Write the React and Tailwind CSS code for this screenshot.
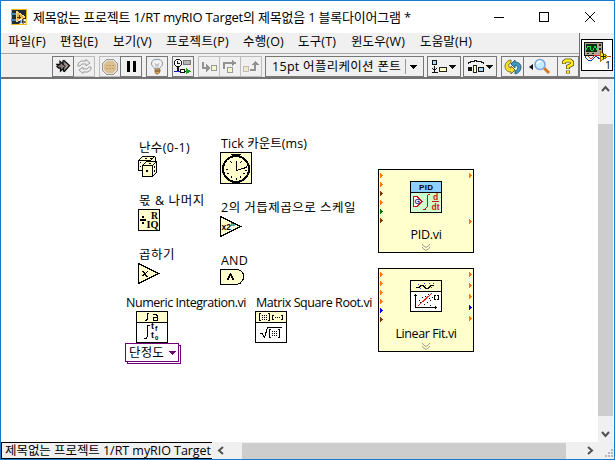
import React, { useLayoutEffect, useRef } from "react";

// Text run whose tracking is computed so that it fills a given width.
function Fit({ w, className = "", children }) {
  const ref = useRef(null);
  useLayoutEffect(() => {
    const el = ref.current;
    el.style.letterSpacing = "0px";
    const natural = el.getBoundingClientRect().width;
    el.style.letterSpacing = (w - natural) / children.length + "px";
  }, [w, children]);
  return (
    <span ref={ref} className={"inline-block shrink-0 whitespace-pre " + className}>
      {children}
    </span>
  );
}

function Svg({ w, h, className = "", children }) {
  return (
    <svg width={w} height={h} viewBox={`0 0 ${w} ${h}`} className={"block shrink-0 " + className} shapeRendering="crispEdges" fill="none">
      {children}
    </svg>
  );
}

const MENU = [
  ["파일(F)", 38, "ml-[7px]"],
  ["편집(E)", 38, "ml-[14px]"],
  ["보기(V)", 39, "ml-[15px]"],
  ["프로젝트(P)", 63, "ml-[14px]"],
  ["수행(O)", 41, "ml-[14px]"],
  ["도구(T)", 38, "ml-[14px]"],
  ["윈도우(W)", 54, "ml-[15px]"],
  ["도움말(H)", 52, "ml-[15px]"],
];

function Cell({ className = "", children }) {
  return <div className={"flex h-full items-center justify-center " + className}>{children}</div>;
}

function AppIcon() {
  return (
    <Svg w={16} h={16}>
      <rect width="16" height="16" fill="#f0b81c" />
      <rect x="1" y="1" width="14" height="14" fill="#242b30" />
      <path d="M0 5H5M0 11H5" stroke="#3e8bc4" strokeWidth="2" />
      <path d="M5 2L14 8L5 13Z" fill="#e9b33b" stroke="#f6dc91" />
      <path d="M6 8H10M8 6V10" stroke="#4b3210" />
      <text x="8" y="15" fontSize="7" fontWeight="bold" fill="#fff" className="font-['Liberation_Sans',sans-serif]">15</text>
    </Svg>
  );
}

function RunArrow() {
  return (
    <svg width="15" height="15" viewBox="0 0 15 15" fill="none" className="block">
      <path d="M1 5.5H4V2.5L7 5V2L8 1.5L13.5 6.5L8.5 12.5L7.5 12V9.5L4.5 12V9H2.5L1 7.5L2 6.5Z" fill="#8b7f7b" stroke="#111" strokeWidth="1.3" />
      <path d="M7 5L9 7.5L7 9.5" stroke="#111" />
      <path d="M9.5 4.5L11.5 6.5L9.5 9" stroke="#bcb3ae" />
    </svg>
  );
}

function LoopArrows() {
  return (
    <svg width="17" height="15" viewBox="0 0 17 15" className="block">
      <path d="M2 7V4.5L5 2H10V.5L14 4L10 7V5H6L4 7ZM15 8V10.5L12 13H7V14.5L3 11L7 8V10H11L13 8Z" fill="#ececec" stroke="#9d9d9d" />
    </svg>
  );
}

function Stop() {
  return (
    <Svg w={16} h={16}>
      <path d="M5 .5H11L15.5 5V11L11 15.5H5L.5 11V5Z" fill="#dcc092" stroke="#999" />
      <path d="M5 1.5H11L14.5 5V11L11 14.5H5L1.5 11V5Z" stroke="#e0dad0" />
      <path d="M4 6H12M4 9H12" stroke="#c6a05e" strokeDasharray="2 1" />
    </Svg>
  );
}

function Bulb() {
  return (
    <svg width="14" height="17" viewBox="0 0 14 17" fill="none">
      <path d="M5 11C4 9 1 8 1.5 5C2 0 12 0 12.5 5C13 8 10 9 9 11Z" fill="#f0f2f3" stroke="#8c969c" />
      <path d="M5 5L6 8L7 6L8 8L9 5M6 8V11M8 8V11" stroke="#aaa" strokeWidth=".7" />
      <path d="M5 11H10V14L8 16H6L5 14Z" fill="#e2a34c" stroke="#78664e" strokeWidth=".7" />
      <path d="M5 13H10" stroke="#694b29" />
    </svg>
  );
}

function Retain() {
  return (
    <Svg w={18} h={15}>
      <path d="M2 0H6V1H7V2H8V6H7V7H6V8H2V7H1V6H0V2H1V1H2Z" fill="#111" />
      <path d="M2 1H6V2H7V6H6V7H2V6H1V2H2Z" fill="#fff" />
      <path d="M3 2V5H6V4H4V2ZM3 8H5V12H3Z" fill="#111" />
      <rect x="9.5" y="1.5" width="7" height="4" fill="#b5b5b5" stroke="#777" />
      <path d="M0 12.5H13" stroke="#101bd0" />
      <rect x="6.5" y="10.5" width="4" height="3" fill="#fff" stroke="#111" />
      <path d="M12 9L17 12.5L12 15Z" fill="#15a313" />
    </Svg>
  );
}

function StepIcon({ kind }) {
  return (
    <Svg w={16} h={14}>
      {kind === 0 && (
        <>
          <path d="M2 2V8H6" stroke="#929292" strokeWidth="2" />
          <path d="M5 4L9 8L5 12Z" fill="#929292" />
          <rect x="10.5" y="5.5" width="5" height="5" fill="#f8f7ca" stroke="#999" />
        </>
      )}
      {kind === 1 && (
        <>
          <path d="M2 9V3H11" stroke="#929292" strokeWidth="2" />
          <path d="M10 0L15 3L10 6V0Z" fill="#929292" />
          <rect x="5.5" y="7.5" width="5" height="5" fill="#f8f7ca" stroke="#999" />
        </>
      )}
      {kind === 2 && (
        <>
          <rect x=".5" y="6.5" width="5" height="5" fill="#f5e6c4" stroke="#bbb" />
          <path d="M7 10H12V4" stroke="#929292" strokeWidth="2" />
          <path d="M8 5L12 1L16 5Z" fill="#929292" />
        </>
      )}
    </Svg>
  );
}

function AlignIcon() {
  return (
    <Svg w={24} h={14}>
      <rect x=".5" y=".5" width="4" height="4" fill="#a9d8f8" stroke="#111" />
      <path d="M2 6H3V12H2ZM0 12H6V13H0ZM0 8H1V9H4V8H5V9H4V10H3V11H2V10H1V9H0Z" fill="#111" />
      <rect x="7.5" y="7.5" width="7" height="4" fill="#ffffca" stroke="#222" />
      <path d="M17 5H24V6H23V7H22V8H21V9H20V8H19V7H18V6H17Z" fill="#111" />
    </Svg>
  );
}

function DistributeIcon() {
  return (
    <Svg w={25} h={14}>
      <path d="M0 3.5V2.5H2V1.5H6V.5H8V1.5H13V2.5H15V3.5" stroke="#111" />
      <rect x="0" y="7" width="4" height="4" fill="#111" />
      <rect x="5.5" y="5.5" width="3" height="7" fill="#ffffca" stroke="#222" />
      <rect x="10.5" y="7.5" width="5" height="4" fill="#a9d8f8" stroke="#111" />
      <path d="M18 5H25V6H24V7H23V8H22V9H21V8H20V7H19V6H18Z" fill="#111" />
    </Svg>
  );
}

function CleanIcon() {
  return (
    <svg width="18" height="16" viewBox="0 0 18 16">
      <path d="M7 1V4C4 4 4 9 7 9V7L11 11L7 15V13C-1 13-1 2 7 1Z" fill="#f3df27" stroke="#7c6c20" />
      <path d="M11 15V12C15 11 14 6 11 6V9L7 5L11 1V3C19 3 19 13 11 15Z" fill="#3d9bc6" stroke="#286578" />
    </svg>
  );
}

function SearchIcon() {
  return (
    <svg width="24" height="17" viewBox="0 0 24 17">
      <path d="M0 9L4 6V12Z" fill="#111" />
      <path d="M15 10L20 15" stroke="#d27829" strokeWidth="3" />
      <circle cx="11" cy="6.5" r="5" fill="#c5ecff" stroke="#7ba5dc" strokeWidth="1.5" />
      <path d="M8 6C8.500 4 10.500 3 12 3.500" stroke="#fff" strokeWidth="1.5" fill="none" />
    </svg>
  );
}

function HelpIcon() {
  return (
    <svg width="12" height="17" viewBox="0 0 12 17" fill="none">
      <path d="M2 6V4L4 2.500H8L10 4V6.500L6 8.500V11M6 12.500V15.500" stroke="#665510" strokeWidth="4" />
      <path d="M2 5.500V4L4 2.500H8L10 4V6.500L6 8.500V10.500M6 13V15" stroke="#ffee20" strokeWidth="2.400" />
    </svg>
  );
}

function ViIcon() {
  return (
    <Svg w={32} h={32}>
      <rect x=".5" y=".5" width="31" height="31" fill="#fff" stroke="#000" />
      <rect x="3.5" y="3.5" width="18" height="13" fill="#b5a493" stroke="#111" />
      <rect x="5" y="5" width="11" height="8" fill="#052f12" />
      <path d="M5 11L7 7H9L10 11H12L14 7L16 11" stroke="#16de3c" />
      <path d="M18 5H20V7H18ZM18 9H20V11H18ZM6 14H8V15H6ZM11 14H13V15H11Z" fill="#222" />
      <path d="M4 17C5 21 8 22 11 21L15 17L19 20" stroke="#1638a8" />
      <path d="M7 17L10 20L14 16L19 17H30" stroke="#e72c25" />
      <path d="M19.5 13L27 17.5L19.500 22Z" fill="#f6e823" stroke="#9d7900" />
      <path d="M20 17.5H25M22.5 15V20" stroke="#222" />
      <text x="24" y="29.5" fontSize="10.5" fill="#000" className="font-['Open_Sans',sans-serif]">1</text>
    </Svg>
  );
}

function Dice() {
  return (
    <Svg w={20} h={21}>
      <path d="M.5 4.500L4.500.5H16.500L17.500 1.500V9.500L12.500 14.500H.5Z" fill="#ffffce" stroke="#000" />
      <path d="M.5 4.500H12.500V9.500M12.500 4.500L16.500 .5" stroke="#000" />
      <path d="M4.500 9.500L8.500 5.500H18.500V16.500L14.500 20.500H4.500Z" fill="#ffffce" stroke="#000" />
      <path d="M4.500 9.500H14.500V20.500M14.500 9.500L18.500 5.500" stroke="#000" />
      <path d="M2 6H3V7H2ZM2 10H3V11H2ZM7 2H9V3H7ZM12 2H14V3H12ZM8 14H10V16H8ZM11 7H13V8H11ZM16 10H17V12H16ZM16 14H17V16H16Z" fill="#000" />
    </Svg>
  );
}

function Clock() {
  return (
    <Svg w={32} h={32}>
      <rect x=".5" y=".5" width="31" height="31" fill="#ffffce" stroke="#000" />
      <path d="M11 2H21V3H11ZM13 3H19V4H13Z" fill="#000" />
      <circle cx="16" cy="17" r="13" stroke="#000" strokeWidth="2" />
      <path d="M16.5 9V18.500L21 17V16H24V15H26V14H27M16.500 26V28M6 17H8M25 18H27M10 9L12 11M22 9L20 11M11 26L12 24M21 26L20 24M7 22L9 21M25 22L23 21" stroke="#000" />
    </Svg>
  );
}

function Quotient() {
  return (
    <Svg w={22} h={22}>
      <rect x=".5" y=".5" width="21" height="21" fill="#ffffce" stroke="#000" />
      <path d="M2 10H8V12H2ZM4 7H6V9H4ZM4 13H6V15H4Z" fill="#000" />
      <text x="13" y="10" fontSize="10" fontWeight="bold" fill="#000" textLength="7" lengthAdjust="spacingAndGlyphs" className="font-['Liberation_Serif',serif]">R</text>
      <text x="8.5" y="19" fontSize="10" fontWeight="bold" fill="#000" textLength="12" lengthAdjust="spacingAndGlyphs" className="font-['Liberation_Serif',serif]">IQ</text>
    </Svg>
  );
}

function Triangle({ power = false }) {
  return (
    <Svg w={22} h={22}>
      <path d="M.5 .5V20.5L20.5 10.5Z" fill="#ffffce" stroke="#000" />
      {power ? (
        <>
          <text x="1.5" y="14" fontSize="8.5" fontWeight="bold" fill="#000" textLength="9.5" lengthAdjust="spacingAndGlyphs" className="font-['Liberation_Sans',sans-serif]">x2</text>
          <text x="11" y="10" fontSize="6" fontWeight="bold" fill="#000" className="font-['Liberation_Sans',sans-serif]">n</text>
        </>
      ) : (
        <path d="M4 8H6V9H7V10H8V9H9V8H10V9H9V10H8V12H9V13H10V14H8V13H7V12H6V13H4V12H5V11H6V10H5V9H4Z" fill="#000" />
      )}
    </Svg>
  );
}

function AndGate() {
  return (
    <Svg w={25} h={16}>
      <path d="M.5 .5H17L20.5 1.5L23.5 5V10L20.5 14L17 15.500H.5Z" fill="#ffffce" stroke="#000" />
      <path d="M7 11V9H8V7H9V5H10V4H11V5H12V7H13V9H14V11H12V9H11V7H10V9H9V11Z" fill="#000" />
    </Svg>
  );
}

function Integration() {
  return (
    <Svg w={32} h={32}>
      <rect x=".5" y=".5" width="31" height="31" fill="#fff" stroke="#000" />
      <rect x="1" y="1" width="30" height="10" fill="#ffffce" />
      <path d="M1 11.5H31M13 2.5H12L11.5 3V8L10 9.5H9M14 14.5H12L11.5 15V25L10 27.500H8" stroke="#000" />
      <path d="M17 3.500H20L21.500 5V9.500H17.500V6.500H21" stroke="#000" />
      <g fill="#000" fontSize="9" fontWeight="bold" className="font-['Liberation_Sans',sans-serif]">
        <text x="15" y="18">t</text>
        <text x="19" y="20" fontSize="7">f</text>
        <text x="15" y="27">t</text>
        <text x="19" y="29" fontSize="6">0</text>
      </g>
    </Svg>
  );
}

function MatrixRoot() {
  return (
    <Svg w={32} h={32}>
      <rect x=".5" y=".5" width="31" height="31" fill="#fff" stroke="#000" />
      <rect x="1" y="1" width="30" height="10" fill="#ffffce" />
      <path d="M1 11.5H31M6 2.500H4.500V9.500H6M13 2.500H14.500V9.500H13M19 4.500H17.500V8.500H19M26 4.500H27.500V8.500H26M5 22.500H7L9.500 26.500L12.500 16.500H27M16 18.500H14.500V26.500H16M23 18.500H24.500V26.500H23" stroke="#000" />
      <path d="M7 4.500H12M7 6.500H12M7 8.500H12M20 6.500H25M17 20.500H22M17 22.500H22M17 24.500H22" stroke="#000" strokeDasharray="1 1" />
    </Svg>
  );
}

function PidIcon() {
  return (
    <Svg w={32} h={32}>
      <rect x=".5" y=".5" width="31" height="31" fill="#ceffce" stroke="#000" />
      <rect x="1" y="1" width="30" height="10" fill="#8ed0ff" />
      <path d="M1 11.5H31" stroke="#000" />
      <text x="9" y="9" fontSize="8" fontWeight="bold" fill="#000" textLength="14" className="font-['Liberation_Sans',sans-serif]">PID</text>
      <path d="M3.500 15.500H7L12 20.500L7 25.500H3.500Z" fill="#fff" stroke="#ce1212" />
      <text x="4.500" y="23" fontSize="7" fontWeight="bold" fill="#252590" className="font-['Liberation_Sans',sans-serif]">G</text>
      <path d="M20 13.500H18.500L17 15V26L15 28.500H13M22 20.500H29" stroke="#ce1212" />
      <g fill="#ce1212" fontSize="8.500" fontWeight="bold" className="font-['Liberation_Sans',sans-serif]">
        <text x="23" y="19">d</text>
        <text x="21.500" y="29" textLength="8">dt</text>
      </g>
    </Svg>
  );
}

function FitIcon() {
  return (
    <Svg w={32} h={32}>
      <rect x=".5" y=".5" width="31" height="31" fill="#fff" stroke="#000" />
      <rect x="1" y="1" width="30" height="10" fill="#ffffce" />
      <path d="M1 11.5H31M6 7.500H9L11 5.500H13L16 8.500H18L21 5.500H24M5.500 14V27.500H27M4 15.500H7M25.500 26V29M26 15.500H24.500V19.500H26M27 15.500H28.500V19.500H27" stroke="#000" />
      <path d="M8 26L22 13" stroke="#ed1b1b" />
      <path d="M8 4H9V5H8ZM14 3H15V4H14ZM19 3H20V4H19ZM23 3H24V4H23ZM10 8H11V9H10ZM15 5H16V6H15ZM21 7H22V8H21Z" fill="#173dff" />
      <path d="M9 20H10V21H9ZM12 17H13V18H12ZM15 16H16V17H15ZM18 14H19V15H18ZM10 22H11V23H10ZM14 24H15V25H14ZM17 22H18V23H17ZM20 20H21V21H20ZM19 18H20V19H19ZM22 17H23V18H22ZM20 25H21V26H20Z" fill="#000" />
    </Svg>
  );
}

const O = "#ff7b00";
const BR = "#8c3300";
const GR = "#007200";
const BL = "#0000ff";

// Expandable subVI node: terminals are [x, y, colour] inside the node.
function ExpressNode({ terminals, icon, label, labelWidth }) {
  return (
    <div className="relative flex h-[84px] w-[96px] flex-col items-center border border-black bg-[#ffffce]">
      <Svg w={94} h={82} className="absolute left-0 top-0">
        {terminals.map(([x, y, c], i) => (
          <path key={i} d={`M${x} ${y}H${x + 1}V${y + 1}H${x + 2}V${y + 2}H${x + 3}V${y + 3}H${x + 2}V${y + 4}H${x + 1}V${y + 5}H${x}Z`} fill={c} />
        ))}
        <path d="M43.5 74V75L47 77.5L50.500 75V74M43.500 77V78L47 80.500L50.500 78V77" stroke="#a0a090" shapeRendering="auto" />
      </Svg>
      <div className="mt-[11px]">{icon}</div>
      <div className="mt-[14px] h-4 leading-4">
        <Fit w={labelWidth}>{label}</Fit>
      </div>
    </div>
  );
}

function Node({ at, children }) {
  return <div className={"absolute leading-4 " + at}>{children}</div>;
}

function Chevron({ d, w, h }) {
  return (
    <svg width={w} height={h} viewBox={`0 0 ${w} ${h}`} fill="none" className="block">
      <path d={d} stroke="#505050" strokeWidth="2" />
    </svg>
  );
}

export default function App() {
  return (
    <div className="flex h-[460px] w-[615px] flex-col overflow-hidden border border-[#1979ca] bg-white font-['Open_Sans','Noto_Sans_CJK_KR',sans-serif] text-[12.5px] text-black">
      {/* title bar */}
      <div className="flex h-8 shrink-0 items-center pl-[10px]">
        <AppIcon />
        <Fit w={378} className="ml-[6px] text-[13px] leading-5">제목없는 프로젝트 1/RT myRIO Target의 제목없음 1 블록다이어그램 *</Fit>
        <Svg w={102} h={12} className="ml-[83px]">
          <path d="M0 6.5H10" stroke="#000" />
          <rect x="45.5" y="1.5" width="9" height="9" stroke="#000" />
          <path d="M91 1L101 11M101 1L91 11" stroke="#000" shapeRendering="auto" />
        </Svg>
      </div>

      {/* menu and toolbar */}
      <div className="flex h-[46px] shrink-0 border-b-2 border-[#737373] bg-[#f0f0f0]">
        <div className="flex w-[579px] shrink-0 flex-col border-r border-[#737373]">
          <div className="flex h-[21px] items-center border-b border-[#a8a8a8] pb-[2px] leading-4">
            {MENU.map(([t, w, m]) => (
              <Fit key={t} w={w} className={m}>{t}</Fit>
            ))}
          </div>
          <div className="flex pl-[51px] pt-[2px]">
            <div className="flex h-[21px] shrink-0 bg-[#efefef]">
              <Cell className="w-[22px] border border-[#777]"><RunArrow /></Cell>
              <Cell className="w-[21px] border border-l-0 border-[#bcbcbc]"><LoopArrows /></Cell>
            </div>
            <div className="ml-[4px] flex h-[21px] shrink-0">
              <Cell className="w-[21px] border border-r-0 border-[#bcbcbc]"><Stop /></Cell>
              <Cell className="w-[22px] gap-[3px] border border-[#777]">
                <div className="h-[11px] w-[3px] bg-black" />
                <div className="h-[11px] w-[3px] bg-black" />
              </Cell>
            </div>
            <Cell className="ml-[4px] h-[21px] w-[22px] border border-[#777]"><Bulb /></Cell>
            <Cell className="ml-[4px] h-[21px] w-[22px] border border-[#777]"><Retain /></Cell>
            <div className="ml-[4px] flex h-[21px] border border-[#bcbcbc]">
              <Cell className="w-[21px] border-r border-[#bcbcbc]"><StepIcon kind={0} /></Cell>
              <Cell className="w-[21px] border-r border-[#bcbcbc]"><StepIcon kind={1} /></Cell>
              <Cell className="w-[20px]"><StepIcon kind={2} /></Cell>
            </div>
            <div className="ml-[3px] flex h-[21px] w-[159px] items-center border border-[#777]">
              <Fit w={129} className="ml-[6px] leading-4">15pt 어플리케이션 폰트</Fit>
              <div className="ml-[4px] h-[15px] w-px bg-[#999]" />
              <Svg w={7} h={4} className="ml-[4px]">
                <path d="M0 0H7V1H6V2H5V3H4V4H3V3H2V2H1V1H0Z" fill="#000" />
              </Svg>
            </div>
            <Cell className="ml-[3px] h-[21px] w-[34px] border border-[#777]"><AlignIcon /></Cell>
            <Cell className="ml-[2px] h-[21px] w-[34px] border border-[#777]"><DistributeIcon /></Cell>
            <div className="ml-[4px] flex h-[21px] w-[78px] border border-[#777]">
              <Cell className="w-[22px] border-r border-[#777]"><CleanIcon /></Cell>
              <Cell className="w-[33px]"><SearchIcon /></Cell>
              <Cell className="w-[21px] border-l border-[#777]"><HelpIcon /></Cell>
            </div>
          </div>
        </div>
        <div className="pl-px pt-[6px]"><ViIcon /></div>
      </div>

      {/* diagram and vertical scroll bar */}
      <div className="flex min-h-0 flex-1">
        <div className="relative h-full w-[597px] shrink-0 overflow-hidden bg-white">
          <Node at="left-[138px] top-[61px]"><Fit w={51}>난수(0-1)</Fit></Node>
          <Node at="left-[137px] top-[77px]"><Dice /></Node>
          <Node at="left-[220px] top-[57px]"><Fit w={86}>Tick 카운트(ms)</Fit></Node>
          <Node at="left-[219px] top-[73px]"><Clock /></Node>
          <Node at="left-[138px] top-[114px]"><Fit w={66}>몫 &amp; 나머지</Fit></Node>
          <Node at="left-[137px] top-[130px]"><Quotient /></Node>
          <Node at="left-[220px] top-[121px]"><Fit w={135}>2의 거듭제곱으로 스케일</Fit></Node>
          <Node at="left-[219px] top-[137px]"><Triangle power /></Node>
          <Node at="left-[138px] top-[168px]"><Fit w={36}>곱하기</Fit></Node>
          <Node at="left-[137px] top-[184px]"><Triangle /></Node>
          <Node at="left-[220px] top-[174px]"><Fit w={27}>AND</Fit></Node>
          <Node at="left-[219px] top-[190px]"><AndGate /></Node>
          <Node at="left-[125px] top-[216px]"><Fit w={120}>Numeric Integration.vi</Fit></Node>
          <Node at="left-[135px] top-[232px]"><Integration /></Node>
          <Node at="left-[124px] top-[264px]">
            <div className="relative h-[20px] w-[56px]">
              <div className="absolute left-[2px] top-[2px] h-[19px] w-[54px] border border-[#730073] bg-white" />
              <div className="absolute left-0 top-0 flex h-[19px] w-[54px] items-center border border-[#730073] bg-white">
                <Fit w={35} className="ml-[3px]">단정도</Fit>
                <Svg w={7} h={4} className="ml-[5px]">
                  <path d="M0 0H7V1H6V2H5V3H4V4H3V3H2V2H1V1H0Z" fill="#730073" />
                </Svg>
              </div>
            </div>
          </Node>
          <Node at="left-[255px] top-[216px]"><Fit w={116}>Matrix Square Root.vi</Fit></Node>
          <Node at="left-[254px] top-[232px]"><MatrixRoot /></Node>
          <Node at="left-[377px] top-[90px]">
            <ExpressNode
              terminals={[[1, 3, O], [1, 12, O], [1, 21, BR], [1, 30, O], [1, 39, GR], [1, 48, BR], [90, 3, O], [90, 49, O]]}
              icon={<PidIcon />}
              label="PID.vi"
              labelWidth={31}
            />
          </Node>
          <Node at="left-[377px] top-[189px]">
            <ExpressNode
              terminals={[[1, 3, O], [1, 12, O], [1, 21, O], [1, 30, O], [1, 39, BL], [1, 48, BR], [90, 3, O], [90, 14, O], [90, 25, O], [90, 36, BL], [90, 47, O]]}
              icon={<FitIcon />}
              label="Linear Fit.vi"
              labelWidth={61}
            />
          </Node>
        </div>
        <div className="flex w-[15px] flex-col items-center bg-[#f0f0f0]">
          <div className="flex h-[45px] items-start pt-[6px]"><Chevron w={9} h={7} d="M1 6L4.5 2L8 6" /></div>
          <div className="h-[292px] w-full bg-[#cdcdcd]" />
          <div className="pt-[15px]"><Chevron w={9} h={7} d="M1 1L4.5 5L8 1" /></div>
        </div>
      </div>

      {/* target label and horizontal scroll bar */}
      <div className="flex h-[17px] shrink-0 bg-[#f0f0f0]">
        <div className="flex w-[211px] items-center border-y border-l border-black pl-[3px] leading-[15px]">
          <Fit w={206}>제목없는 프로젝트 1/RT myRIO Target</Fit>
        </div>
        <div className="flex w-[30px] items-center pl-[5px]"><Chevron w={7} h={9} d="M6 1L2 4.5L6 8" /></div>
        <div className="mt-px w-[324px] bg-[#cdcdcd]" />
        <div className="flex w-[32px] items-center pl-[21px]"><Chevron w={7} h={9} d="M1 1L5 4.5L1 8" /></div>
        <Svg w={12} h={17} className="ml-[4px]">
          <path d="M9 7H11V9H9ZM6 10H8V12H6ZM9 10H11V12H9ZM3 13H5V15H3ZM6 13H8V15H6ZM9 13H11V15H9Z" fill="#b8b8b8" />
        </Svg>
      </div>
    </div>
  );
}
